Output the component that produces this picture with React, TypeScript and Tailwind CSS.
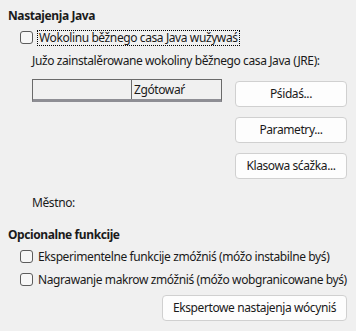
import type { ReactNode } from 'react';

const Box = () => (
  <span className="mr-[4px] inline-block h-[13px] w-[13px] shrink-0 rounded-[3px] border border-[#5c5c5c] bg-[#f7f7f7]" />
);

const Check = ({ children, focused }: { children: ReactNode; focused?: boolean }) => (
  <label className="flex h-[23px] items-center whitespace-nowrap">
    <Box />
    <span className={focused ? 'border border-dotted border-black px-px leading-[14px]' : 'px-px leading-[14px]'}>
      {children}
    </span>
  </label>
);

const Btn = ({ children, className = '' }: { children: ReactNode; className?: string }) => (
  <button
    type="button"
    className={`flex h-[26px] items-center justify-center rounded-[4px] border border-[#d0d0d0] bg-[#fdfdfd] text-[12px] tracking-[-0.4px] text-[#1a1a1a] ${className}`}
  >
    {children}
  </button>
);

export default function App() {
  return (
    <div
      className="h-[331px] w-[356px] overflow-hidden bg-[#f0f0f0] pl-[8px] pt-[8px] text-[12px] tracking-[-0.4px] text-[#1a1a1a]"
      style={{ fontFamily: '"Noto Sans", "Open Sans", sans-serif' }}
    >
      <div className="font-bold leading-[16px]">Nastajenja Java</div>
      <div className="mt-[2px] pl-[12px]">
        <Check focused>Wokolinu běžnego casa Java wužywaś</Check>
      </div>
      <div className="mt-[4px] pl-[24px] leading-[16px]">Južo zainstalěrowane wokoliny běžnego casa Java (JRE):</div>

      <div className="mt-[10px] flex pl-[24px]">
        <div className="w-[190px]">
          <div className="flex h-[23px] border border-b-[3px] border-[#6a6a6a] border-b-[#8e8e94]">
            <div className="w-[99px] border-r border-[#6a6a6a]" />
            <div className="flex items-center pl-[2px]">Zgótowaŕ</div>
          </div>
        </div>
        <div className="ml-[13px] mt-[2px] flex w-[112px] flex-col gap-[10px]">
          <Btn>Pśidaś...</Btn>
          <Btn>Parametry...</Btn>
          <Btn>Klasowa sćažka...</Btn>
        </div>
      </div>

      <div className="mt-[16px] pl-[24px] leading-[16px]">Městno:</div>

      <div className="mt-[16px] font-bold leading-[16px]">Opcionalne funkcije</div>
      <div className="mt-[2px] pl-[12px]">
        <Check>Eksperimentelne funkcije zmóžniś (móžo instabilne byś)</Check>
        <Check>Nagrawanje makrow zmóžniś (móžo wobgranicowane byś)</Check>
      </div>
      <div className="mt-[4px] flex justify-end pr-[9px]">
        <Btn className="w-[185px]">Ekspertowe nastajenja wócyniś</Btn>
      </div>
    </div>
  );
}
